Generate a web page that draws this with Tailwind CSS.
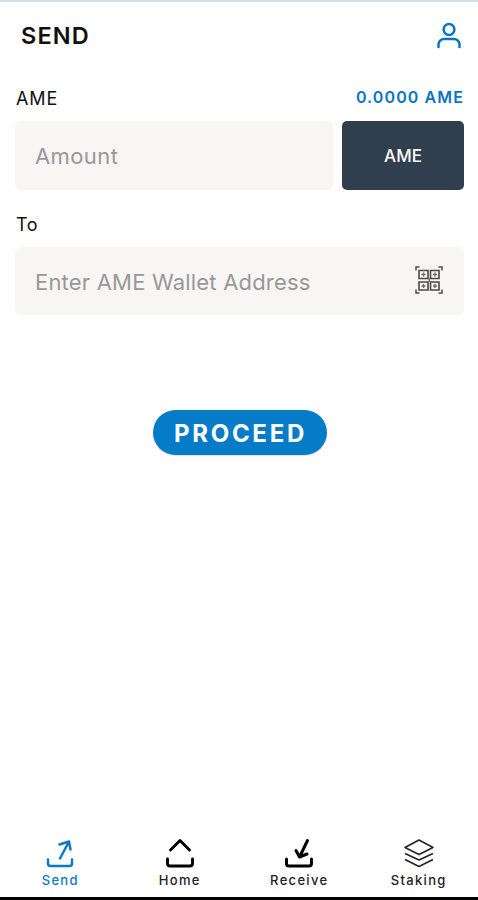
<!DOCTYPE html>
<html lang="en">
<head>
<meta charset="utf-8">
<meta name="viewport" content="width=device-width, initial-scale=1">
<title>Send</title>
<script src="https://cdn.jsdelivr.net/npm/@tailwindcss/browser@4"></script>
</head>
<body class="bg-white font-['Inter',sans-serif] text-[#111]">
<div class="flex h-[900px] w-full flex-col overflow-hidden border-t-2 border-b-[3px] border-t-[#cfdfee] border-b-black">
  <header class="flex h-[68px] items-center justify-between pl-[21px] pr-4">
    <h1 class="text-[23.5px] font-semibold tracking-[1.100px]">SEND</h1>
    <button aria-label="Account"><svg class="-mt-px block h-[27px] w-[26px]" viewBox="0 0 26 27" fill="none" stroke="#0b74c4" stroke-width="2.5" stroke-linecap="round"><circle cx="13" cy="7.5" r="5.4"/><path d="M2.500 25v-2.500a5.500 5.500 0 0 1 5.500-5.500h10a5.500 5.500 0 0 1 5.500 5.500v2.500"/></svg></button>
  </header>
  <main class="flex-1 pl-[15px] pr-[14px]">
    <div class="flex h-[51px] items-center justify-between pt-[3px]">
      <label class="pl-px pt-[3px] text-[18px] tracking-[0.900px]">AME</label>
      <span class="text-[16px] font-semibold tracking-[1.100px] text-[#0b74c4]">0.0000 AME</span>
    </div>
    <div class="flex h-[69px] gap-[9px]">
      <div class="flex flex-1 items-center rounded-md bg-[#f7f6f5] pl-5 pt-[2px] text-[22px] tracking-[0.400px] text-[#999896]">Amount</div>
      <button class="w-[122px] rounded-[5px] bg-[#313e4e] pt-[2px] text-[17px] font-medium text-white">AME</button>
    </div>
    <div class="flex h-[57px] items-center pl-px pt-[11px] text-[18px] tracking-[0.500px]">To</div>
    <div class="flex h-[68px] rounded-md bg-[#f7f6f5]">
      <div class="flex flex-1 items-center pl-5 pt-[2px] text-[22px] tracking-[0.200px] text-[#999896]">Enter AME Wallet Address</div>
      <button aria-label="Scan code" class="mr-[21px]"><svg class="-mt-[2px] block h-[28px] w-[28px]" viewBox="0 0 28 28" fill="none" stroke="#4a4a4a"><path stroke-width="1.500" d="M1 4.500V1h3.500M23.500 1H27v3.500M27 23.500V27h-3.500M4.500 27H1v-3.500"/><path stroke-width="1.600" d="M4 4.500h9v8h-9zM15.500 4.500h8.500v8h-8.500zM4 16h9v8H4zM15.500 16H24v8h-8.500z"/><path stroke-width="1.400" stroke="#6b6b6b" d="M6.500 8.500h4M8.500 6.500v4M18 8.500h4M20 6.500v4M6.500 20h4M8.500 18v4M18 20h4M20 18v4M14.250 12v4"/></svg></button>
    </div>
    <div class="flex justify-center pt-[95px]">
      <button class="h-[45px] w-[174px] rounded-full bg-[#067bc8] pt-[3px] pl-[2px] text-[24px] font-bold tracking-[2.700px] text-white shadow-[0_1px_1px_rgba(0,0,0,0.12)]">PROCEED</button>
    </div>
  </main>
  <nav class="grid h-[61px] grid-cols-4 text-[13px] leading-4 font-[450] tracking-[1.300px] text-[#222]">
    <a class="flex flex-col items-center gap-[2px] pl-px text-[#0b7acb]"><svg class="h-[34px] w-[32px]" viewBox="0 0 32 34" fill="none" stroke="currentColor" stroke-width="2.500" stroke-linecap="round" stroke-linejoin="round"><path d="M4 23.500v4q0 2.500 2.500 2.500h19q2.500 0 2.500-2.500v-4M16 22.500L24.500 6.500M15.500 8.500L25 5.500l1.500 8"/></svg>Send</a>
    <a class="flex flex-col items-center gap-[2px] pl-px"><svg class="h-[34px] w-[32px]" viewBox="0 0 32 34" fill="none" stroke="#000" stroke-width="2.900" stroke-linecap="round" stroke-linejoin="round"><path d="M3.500 23v4.500q0 2.500 2.500 2.500h20q2.500 0 2.500-2.500V23M6.500 14L16 4.500l9.500 9.500"/></svg>Home</a>
    <a class="flex flex-col items-center gap-[2px] pl-px"><svg class="h-[34px] w-[32px]" viewBox="0 0 32 34" fill="none" stroke="#000" stroke-width="3" stroke-linecap="round" stroke-linejoin="round"><path d="M3.500 23v4.500q0 2.500 2.500 2.500h20q2.500 0 2.500-2.500V23M24.500 4.500L17 20M13 14.500L16.500 21l7.500-3"/></svg>Receive</a>
    <a class="flex flex-col items-center gap-[2px] pl-px"><svg class="h-[34px] w-[32px]" viewBox="0 0 32 34" fill="none" stroke="#222" stroke-width="1.500" stroke-linejoin="round"><path d="M16 4L30 11.500 16 18.500 2 11.500zM2 17.500L16 24l14-6.500M2 23.500L16 30.500l14-7"/></svg>Staking</a>
  </nav>
</div>
</body>
</html>
